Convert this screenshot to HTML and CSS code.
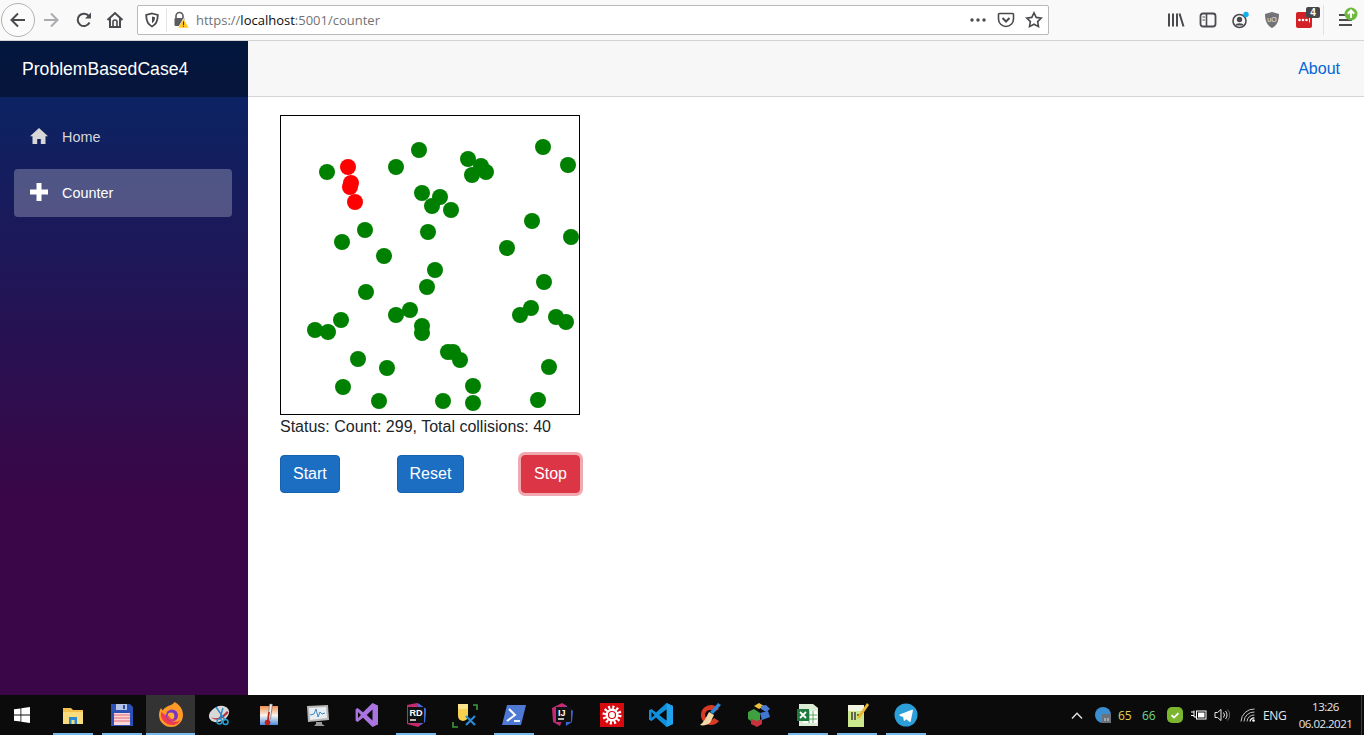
FILE: index.html
```html
<!DOCTYPE html>
<html lang="en">
<head>
<meta charset="UTF-8">
<title>ProblemBasedCase4</title>
<link rel="stylesheet" href="styles.css">
</head>
<body>

<div class="toolbar">
  <button class="nav-btn back"><svg width="20" height="20" viewBox="0 0 20 20"><path d="M17 10H4M10 3.5L3.5 10l6.500 6.500" class="stroke"/></svg></button>
  <div class="nav-btn fwd"><svg width="20" height="20" viewBox="0 0 20 20"><path d="M3 10h13M10 3.500l6.500 6.500-6.500 6.500" class="stroke muted"/></svg></div>
  <div class="nav-btn reload"><svg width="20" height="20" viewBox="0 0 20 20"><path d="M15.500 12.500a6.200 6.200 0 1 1-.6-6.300" class="stroke"/><path d="M17 2.500v6h-6z" class="fill"/></svg></div>
  <div class="nav-btn home"><svg width="20" height="20" viewBox="0 0 20 20"><path d="M2.500 10L10 3l7.500 7M5 8.500V17h10V8.500" class="stroke"/><path d="M8 17v-5a2 2 0 0 1 4 0v5" class="stroke thin"/></svg></div>

  <div class="urlbar">
    <svg class="url-shield" width="16" height="16" viewBox="0 0 16 16"><path d="M8 1.500l5.800 1.500c0 5.500-1.500 9.500-5.800 11.500C3.700 12.500 2.200 8.500 2.200 3z" fill="none" stroke="#4a4a4f" stroke-width="1.800"/><path d="M8 4.500l3 .8c0 2.500-.8 4.700-3 6z" fill="#4a4a4f"/></svg>
    <span class="url-sep"></span>
    <svg class="url-lock" width="18" height="18" viewBox="0 0 18 18"><path d="M4 7.500V5a3.500 3.500 0 0 1 7 0v2.500" fill="none" stroke="#5b5b60" stroke-width="1.600"/><rect x="2.500" y="7" width="10" height="8" rx="1" fill="#5b5b60"/><path d="M11.500 7.500l5.500 9.500H6z" fill="#ffc61e" stroke="#fff" stroke-width=".6"/><path d="M11.500 10.500v3.500M11.500 14.800v1" stroke="#3d3000" stroke-width="1"/></svg>
    <span class="url-text">https://<b>localhost</b>:5001/counter</span>
    <span class="url-actions">
      <svg width="18" height="16" viewBox="0 0 18 16"><circle cx="3" cy="8" r="1.700" class="fill"/><circle cx="9" cy="8" r="1.700" class="fill"/><circle cx="15" cy="8" r="1.700" class="fill"/></svg>
      <svg width="18" height="18" viewBox="0 0 18 18"><path d="M2.500 2.500h13a1 1 0 0 1 1 1V8a7.500 7.500 0 0 1-15 0V3.500a1 1 0 0 1 1-1z" class="stroke thin"/><path d="M5.500 7L9 10.500 12.500 7" class="stroke"/></svg>
      <svg width="18" height="18" viewBox="0 0 18 18"><path d="M9 1.800l2.200 4.600 5 .7-3.600 3.500.9 5L9 13.200 4.500 15.600l.9-5L1.800 7.100l5-.7z" class="stroke thin"/></svg>
    </span>
  </div>

  <div class="tools">
    <span class="tool"><svg width="18" height="16" viewBox="0 0 18 16"><path d="M2 1.500v13M6 1.500v13M10 1.500v13M12.500 1.500l4 13" class="stroke"/></svg></span>
    <span class="tool"><svg width="18" height="16" viewBox="0 0 18 16"><rect x="1.500" y="1.500" width="15" height="13" rx="2.500" fill="none" stroke="#4a4a4f" stroke-width="1.800"/><path d="M7.500 1.500v13" class="stroke thin"/><path d="M3.500 5h2.500M3.500 8h2.500" stroke="#4a4a4f" stroke-width="1.200"/></svg></span>
    <span class="tool"><svg width="20" height="20" viewBox="0 0 20 20"><circle cx="9.500" cy="11" r="6.500" class="stroke thin"/><circle cx="9.500" cy="9.500" r="2.700" class="fill"/><path d="M4.800 15.500a5 3.500 0 0 1 9.400 0z" class="fill"/><circle cx="16" cy="4.500" r="2.700" fill="#0fb2ee"/></svg></span>
    <span class="tool"><svg width="16" height="18" viewBox="0 0 16 18"><path d="M8 1l7 2c0 7-2 11.500-7 14C3 14.500 1 10 1 3z" fill="#737377"/><text x="8" y="10.500" class="ub-text">uO</text></svg></span>
    <span class="tool">
      <svg class="lp-box" width="16" height="16" viewBox="0 0 16 16"><circle cx="3.500" cy="8" r="1.300" fill="#fff"/><circle cx="7" cy="8" r="1.300" fill="#fff"/><circle cx="10.500" cy="8" r="1.300" fill="#fff"/><path d="M13.500 5.500v5" stroke="#fff"/></svg>
      <span class="lp-badge">4</span>
    </span>
    <span class="tool-sep"></span>
    <span class="tool menu">
      <svg width="16" height="14" viewBox="0 0 16 14"><path d="M2 2h9M2 7h13M2 12h13" class="stroke"/></svg>
      <svg class="update" width="14" height="14" viewBox="0 0 14 14"><circle cx="7" cy="7" r="6.500" fill="#6dbb3e"/><path d="M7 11V4M3.800 6.800L7 3.500l3.200 3.300" fill="none" stroke="#fff" stroke-width="2"/></svg>
    </span>
  </div>
</div>

<div class="page">
  <aside class="sidebar">
    <div class="brand-row"><a class="brand">ProblemBasedCase4</a></div>
    <ul class="nav-list">
      <li class="nav-item">
        <a class="nav-link">
          <svg class="oi" width="18" height="16" viewBox="0 0 18 16"><path d="M9 0L0 8.200h2.500V16h4.700v-5h3.600v5h4.700V8.200H18z"/></svg>
          Home
        </a>
      </li>
      <li class="nav-item">
        <a class="nav-link active">
          <svg class="oi" width="18" height="18" viewBox="0 0 18 18"><path d="M6.500 0h5v6.500H18v5h-6.500V18h-5v-6.500H0v-5h6.500z"/></svg>
          Counter
        </a>
      </li>
    </ul>
  </aside>

  <main class="main">
    <div class="top-row"><a class="about">About</a></div>
    <div class="content">
      <div class="arena">
        <svg width="298" height="298" viewBox="1 1 298 298">
          <g class="ball-red">
            <circle cx="68" cy="52" r="8"/><circle cx="71" cy="68" r="8"/><circle cx="70" cy="72" r="8"/><circle cx="75" cy="87" r="8"/>
          </g>
          <g class="ball-green">
            <circle cx="47" cy="57" r="8"/><circle cx="116" cy="52" r="8"/><circle cx="139" cy="35" r="8"/><circle cx="188" cy="44" r="8"/>
            <circle cx="201" cy="51" r="8"/><circle cx="206" cy="57" r="8"/><circle cx="192" cy="60" r="8"/><circle cx="263" cy="32" r="8"/>
            <circle cx="288" cy="50" r="8"/><circle cx="142" cy="78" r="8"/><circle cx="160" cy="82" r="8"/><circle cx="152" cy="91" r="8"/>
            <circle cx="171" cy="95" r="8"/><circle cx="252" cy="106" r="8"/><circle cx="291" cy="122" r="8"/><circle cx="227" cy="133" r="8"/>
            <circle cx="148" cy="117" r="8"/><circle cx="85" cy="115" r="8"/><circle cx="62" cy="127" r="8"/><circle cx="104" cy="141" r="8"/>
            <circle cx="155" cy="155" r="8"/><circle cx="147" cy="172" r="8"/><circle cx="86" cy="177" r="8"/><circle cx="264" cy="167" r="8"/>
            <circle cx="251" cy="193" r="8"/><circle cx="240" cy="200" r="8"/><circle cx="276" cy="202" r="8"/><circle cx="286" cy="207" r="8"/>
            <circle cx="116" cy="200" r="8"/><circle cx="130" cy="195" r="8"/><circle cx="142" cy="211" r="8"/><circle cx="142" cy="218" r="8"/>
            <circle cx="61" cy="205" r="8"/><circle cx="35" cy="215" r="8"/><circle cx="48" cy="217" r="8"/><circle cx="78" cy="244" r="8"/>
            <circle cx="107" cy="253" r="8"/><circle cx="168" cy="237" r="8"/><circle cx="173" cy="237" r="8"/><circle cx="180" cy="245" r="8"/>
            <circle cx="269" cy="252" r="8"/><circle cx="63" cy="272" r="8"/><circle cx="99" cy="286" r="8"/><circle cx="163" cy="286" r="8"/>
            <circle cx="193" cy="271" r="8"/><circle cx="193" cy="288" r="8"/><circle cx="258" cy="285" r="8"/>
          </g>
        </svg>
      </div>
      <div class="status">Status: Count: 299, Total collisions: 40</div>
      <div class="controls">
        <button class="btn btn-primary">Start</button>
        <button class="btn btn-primary">Reset</button>
        <button class="btn btn-danger">Stop</button>
      </div>
    </div>
  </main>
</div>

<footer class="taskbar">
  <div class="start"><svg width="16" height="16" viewBox="0 0 16 16"><path d="M0 2.300l6.500-.9v6.200H0zM7.300 1.300L16 0v7.600H7.300zM0 8.400h6.500v6.200L0 13.700zM7.300 8.400H16V16l-8.700-1.300z" fill="#fff"/></svg></div>

  <div class="task open"><svg width="24" height="24" viewBox="0 0 24 24"><path d="M2 5h8l2 2h10v14H2z" fill="#f4c04e"/><path d="M2 9h20v12H2z" fill="#fbdc7c"/><path d="M8 14h8v7h-2.500v-4h-3v4H8z" fill="#2a8ad4"/></svg></div>
  <div class="task open"><svg width="24" height="24" viewBox="0 0 24 24"><path d="M1 1h19l3 3v19H1z" fill="#2c50b4"/><path d="M6 1h11v6H6z" fill="#b8c4e4"/><path d="M13 2h2v4h-2z" fill="#2c50b4"/><path d="M4 10h16v12H4z" fill="#fbd7d7"/><path d="M4 12h16M4 15h16M4 18h16" stroke="#e06a78" stroke-width="1.200"/></svg></div>
  <div class="task active"><svg width="26" height="26" viewBox="0 0 26 26"><path d="M13 3c2-1 3-2 3.500-3 5 2.500 8.500 7 8.500 13a12 12 0 0 1-24 0c0-3 1-5.500 2-7l1.500 2.500C6.500 5.500 10 4 13 3z" fill="#ff9a26"/><path d="M3 10a11 11 0 0 0 20 8c-5 4-13 1-14-4z" fill="#ef3c4f"/><circle cx="14" cy="13.500" r="6" fill="#7c34c6"/><circle cx="13" cy="14" r="3.400" fill="#ffb033"/><path d="M9 14a5 5 0 0 0 9 3c-3 1-6 0-7-3z" fill="#ee4060"/></svg></div>
  <div class="task"><svg width="24" height="24" viewBox="0 0 24 24"><ellipse cx="11" cy="11" rx="10.500" ry="7.500" fill="#d8d8d8" transform="rotate(-25 11 11)"/><path d="M3 14c4 3 10 1 16-6l1.500 1.500C15 17 7 19 3 14z" fill="#b8303c"/><path d="M8 4l9 13M15 5L12 15" stroke="#2a8ac4" stroke-width="1.400"/><circle cx="17.500" cy="19" r="2.500" fill="none" stroke="#26a0d8" stroke-width="1.500"/><circle cx="11.500" cy="18.500" r="2.500" fill="none" stroke="#26a0d8" stroke-width="1.500"/></svg></div>
  <div class="task"><svg width="24" height="24" viewBox="0 0 24 24"><defs><linearGradient id="thermo" x1="0" y1="0" x2="0" y2="1"><stop offset="0" stop-color="#f09050"/><stop offset=".5" stop-color="#f8f4ee"/><stop offset="1" stop-color="#4a8ce0"/></linearGradient></defs><path d="M3 3h18v19H3z" fill="url(#thermo)"/><path d="M12.500 1h3l-2 15h-2.500z" fill="#eee" stroke="#555" stroke-width=".6"/><path d="M12 9l-1 8" stroke="#b82020" stroke-width="1.600"/><circle cx="10.500" cy="19.500" r="2.800" fill="#b82020"/></svg></div>
  <div class="task"><svg width="24" height="24" viewBox="0 0 24 24"><path d="M1 3l21-1 1 15-21 2z" fill="#b8b8b8"/><path d="M3 5l17-1 1 11-17 2z" fill="#e8eef2"/><path d="M4 12l4-1 2-5 2 8 2-5 2 2 3-1" fill="none" stroke="#3c86c4" stroke-width="1"/><path d="M10 19h6v2l3 2H8l2-2z" fill="#9a9a9a"/></svg></div>
  <div class="task"><svg width="24" height="24" viewBox="0 0 24 24"><path d="M17.500 0L23 2.600v18.800L17.500 24 8 14.800l-5.400 4.100L.6 17.800V6.200l2-1.100L8 9.200zM17.500 6.500L11.700 12l5.800 5.500zM3 9v6l3-3z" fill="#a974e0" fill-rule="evenodd"/></svg></div>
  <div class="task open"><svg width="26" height="26" viewBox="0 0 26 26"><path d="M4 3l10-2 9 6-1 13-7 5-11-3z" fill="#c6286e"/><path d="M15 1l8 6-1 13-5 3z" fill="#3d6fe0"/><path d="M4 20l7-16 5 2-2 15z" fill="#e0407c"/><rect x="5" y="5" width="16" height="16" fill="#111"/><text x="6.500" y="13.500" class="logo-text">RD</text><path d="M7 18h6" stroke="#fff" stroke-width="1.400"/></svg></div>
  <div class="task"><svg width="26" height="26" viewBox="0 0 26 26"><path d="M6 2h10v12a5 5 0 0 1-10 0z" fill="#f7d04e"/><path d="M6 2h10v5H6z" fill="#fbe58c"/><path d="M21 3h4v5M1 20v5h5" fill="none" stroke="#3c9a3c" stroke-width="1.600"/><path d="M14 14l9 9M23 14l-9 9" stroke="#2a8ad4" stroke-width="2.200"/></svg></div>
  <div class="task open"><svg width="24" height="22" viewBox="0 0 24 22"><path d="M5 1h19l-5 20H0z" fill="#4e7ad6"/><path d="M7 5l6 6-8 6" fill="none" stroke="#fff" stroke-width="2"/><path d="M12 17h6" stroke="#fff" stroke-width="1.800"/></svg></div>
  <div class="task"><svg width="26" height="26" viewBox="0 0 26 26"><path d="M2 6l10-5 5 3-7 20-7-4z" fill="#c42a74"/><path d="M15 3l8 6-1 11-6 4z" fill="#3864d4"/><rect x="6" y="5" width="15" height="15" fill="#111"/><text x="8" y="13.500" class="logo-text">IJ</text><path d="M8 17h6" stroke="#fff" stroke-width="1.400"/></svg></div>
  <div class="task"><svg width="24" height="24" viewBox="0 0 24 24"><path d="M0 0h24v24H0z" fill="#d8090f"/><circle cx="12" cy="12" r="6.500" fill="#fff"/><circle cx="12" cy="12" r="7.500" fill="none" stroke="#fff" stroke-width="4" stroke-dasharray="2 1.930"/><circle cx="12" cy="12" r="3.500" fill="none" stroke="#d8090f" stroke-width="1.200"/></svg></div>
  <div class="task"><svg width="24" height="24" viewBox="0 0 24 24"><path d="M17.500 0L24 3v18l-6.500 3L7 14.500 2.500 18 0 16.800V7.200L2.500 6 7 9.500z" fill="#0f8fdc"/><path d="M17.500 6.500L10.500 12l7 5.500zM2.500 9v6l3-3z" fill="#0b0b0b"/><path d="M17.500 0L24 3v18l-6.500 3z" fill="#1fa3ee"/><path d="M17.500 6.500L10.500 12l7 5.500z" fill="#0b0b0b"/></svg></div>
  <div class="task"><svg width="26" height="26" viewBox="0 0 26 26"><path d="M22 7a10 10 0 1 0 0 12l-5-3a5 5 0 1 1 0-6z" fill="#d83a26"/><path d="M21 1l3 2-8 9-3-2z" fill="#2e86d4"/><path d="M12 10l5 3-4 8c-3 2-7 3-10 2 3-2 6-7 9-13z" fill="#f4d8a8"/></svg></div>
  <div class="task"><svg width="24" height="24" viewBox="0 0 24 24"><path d="M7 3l5-3 5 3-5 3z" fill="#e8c040"/><path d="M14 3l5-1 4 4-4 3-5-3z" fill="#4a7cd8"/><path d="M1 9l6-3 6 4v7l-6 3-6-4z" fill="#3fa040"/><path d="M13 10l8-2 2 6-8 3z" fill="#3f78d0"/><path d="M4 16l6 2 5-2v5l-5 3-6-3z" fill="#c8323e"/></svg></div>
  <div class="task open"><svg width="24" height="24" viewBox="0 0 24 24"><path d="M3 1h14l5 4v18H3z" fill="#dcecd4"/><path d="M7 8h14v12H7z" fill="#fff"/><path d="M7 12h14M7 16h14M13 8v12M17 8v12" stroke="#5ea45e" stroke-width="1"/><path d="M1 6h12v12H1z" fill="#1d7a3c"/><path d="M4 9l6 6M10 9l-6 6" stroke="#fff" stroke-width="1.800"/></svg></div>
  <div class="task open"><svg width="24" height="26" viewBox="0 0 24 26"><path d="M3 3h16v22H3z" fill="#cde88c"/><path d="M3 3h16v6H3z" fill="#f0f4e0"/><path d="M7 10v8M10 10v8" stroke="#333" stroke-width="1.400"/><path d="M12 13h3" stroke="#333" stroke-width="1.400"/><path d="M22 1l2 2-9 13-3 1 1-3z" fill="#e8b830"/></svg></div>
  <div class="task open"><svg width="24" height="24" viewBox="0 0 24 24"><circle cx="12" cy="12" r="11.500" fill="#2c9fd9"/><path d="M5 11.800l13-5c.6-.2 1.100.1.900.9l-2.200 10.500c-.2.700-.6.900-1.200.5l-3.300-2.400-1.600 1.500c-.3.300-.5.300-.7-.1l-.8-3.600-3.100-1c-.7-.2-.7-.7 0-1z" fill="#fff"/></svg></div>

  <div class="tray">
    <svg class="tray-chevron" width="12" height="7" viewBox="0 0 12 7"><path d="M1 6.500L6 1.200l5 5.300" fill="none" stroke="#e6e6e6" stroke-width="1.300"/></svg>
    <svg class="tray-globe" width="16" height="16" viewBox="0 0 16 16"><circle cx="8" cy="8" r="8" fill="#3b8ed0"/><path d="M7 7h9v9H7z" fill="#6c7278"/><path d="M10 14v-3M13 14v-3" stroke="#ddd"/></svg>
    <span class="temp temp-a">65</span>
    <span class="temp temp-b">66</span>
    <svg class="tray-shield" width="16" height="16" viewBox="0 0 16 16"><rect width="16" height="16" rx="5" fill="#7bb62e"/><path d="M4.500 8.200l2.500 2.400 4.500-4.500" fill="none" stroke="#fff" stroke-width="1.800"/></svg>
    <svg class="tray-power" width="16" height="12" viewBox="0 0 16 12"><path d="M0 3h3M0 6.500h3M3 1.500v6.500h2" fill="none" stroke="#fff" stroke-width="1"/><rect x="5.500" y="2" width="9.500" height="8" fill="none" stroke="#fff"/><path d="M7 3.500h6.500v5H7z" fill="#fff"/></svg>
    <svg class="tray-sound" width="16" height="14" viewBox="0 0 16 14"><path d="M1 4.500h2.500L7 1.500v11l-3.500-3H1z" fill="none" stroke="#e6e6e6"/><path d="M9.500 4.500a4 4 0 0 1 0 5M11.500 3a6 6 0 0 1 0 8" fill="none" stroke="#e6e6e6"/><path d="M13.500 1.500a8 8 0 0 1 0 11" fill="none" stroke="#666"/></svg>
    <svg class="tray-wifi" width="16" height="14" viewBox="0 0 16 14"><path d="M1 13.500A13 13 0 0 1 14.500 1M4 13.500A10 10 0 0 1 14.500 4M7 13.500A7 7 0 0 1 14.500 7" fill="none" stroke="#c4c4c4"/><path d="M10 13.500A4 4 0 0 1 14.500 10" fill="none" stroke="#fff" stroke-width="1.200"/><circle cx="13.500" cy="12.500" r="1.300" fill="#fff"/></svg>
    <span class="lang">ENG</span>
    <div class="clock"><span>13:26</span><span>06.02.2021</span></div>
    <span class="show-desktop"></span>
  </div>
</footer>

</body>
</html>
```

FILE: styles.css
```css
* {
  box-sizing: border-box;
}
html, body {
  height: 100%;
}
body {
  margin: 0;
  display: flex;
  flex-direction: column;
  height: 735px;
  overflow: hidden;
  font-family: "Liberation Sans", Arial, sans-serif;
  font-size: 16px;
  color: #212529;
  background: #fff;
}

/* browser toolbar */
.toolbar {
  flex: none;
  display: flex;
  align-items: center;
  height: 41px;
  padding-left: 1px;
  background: #f9f9fa;
  border-bottom: 1px solid #d4d4d6;
}
.stroke {
  fill: none;
  stroke: #4a4a4f;
  stroke-width: 2;
}
.stroke.thin {
  stroke-width: 1.600;
}
.stroke.muted {
  stroke: #ababaf;
}
.fill {
  fill: #4a4a4f;
}
.nav-btn {
  display: flex;
  align-items: center;
  justify-content: center;
  flex: none;
  height: 34px;
  padding: 0;
  background: none;
  border: none;
}
.back {
  width: 34px;
  background: #fbfbfc;
  border: 1px solid #b1b1b3;
  border-radius: 50%;
}
.fwd {
  width: 32px;
}
.reload {
  width: 34px;
}
.home {
  width: 28px;
}
.urlbar {
  flex: none;
  display: flex;
  align-items: center;
  width: 912px;
  height: 30px;
  margin-left: 8px;
  margin-top: -1px;
  padding-left: 6px;
  background: #fff;
  border: 1px solid #b9b9bb;
  border-radius: 2px;
}
.url-shield {
  flex: none;
}
.url-sep {
  flex: none;
  width: 1px;
  height: 24px;
  margin: 0 5px 0 6px;
  background: #e4e4e6;
}
.url-lock {
  flex: none;
}
.url-text {
  margin-left: 6px;
  font-family: "Open Sans", "Noto Sans", sans-serif;
  font-size: 13px;
  color: #737373;
}
.url-text b {
  font-weight: 400;
  color: #0c0c0d;
}
.url-actions {
  display: flex;
  align-items: center;
  gap: 10px;
  margin-left: auto;
  margin-right: 5px;
}
.tools {
  display: flex;
  align-items: center;
  margin-left: 111px;
  height: 40px;
}
.tool {
  position: relative;
  display: flex;
  align-items: center;
  justify-content: center;
  width: 32px;
  height: 34px;
}
.ub-text {
  font-family: "Liberation Sans", sans-serif;
  font-size: 7px;
  fill: #e8e8e8;
  text-anchor: middle;
}
.lp-box {
  border-radius: 2px;
  background: #d32027;
}
.lp-badge {
  position: absolute;
  top: 4px;
  right: 0;
  width: 14px;
  height: 11px;
  border-radius: 2px;
  background: #47474a;
  color: #fff;
  font-size: 10px;
  font-weight: 700;
  line-height: 11px;
  text-align: center;
}
.tool-sep {
  width: 1px;
  height: 30px;
  margin: 0 5px 0 3px;
  background: #e2e2e4;
}
.menu {
  width: 32px;
}
.update {
  position: absolute;
  top: 4px;
  right: 3px;
}

/* app */
.page {
  flex: 1;
  display: flex;
  min-height: 0;
}
.sidebar {
  flex: none;
  width: 248px;
  background: linear-gradient(180deg, #052767 0%, #3a0647 70%);
}
.brand-row {
  display: flex;
  align-items: center;
  height: 56px;
  padding-left: 22px;
  background: rgba(0, 0, 0, .4);
}
.brand {
  font-size: 17.600px;
  color: #fff;
}
.nav-list {
  list-style: none;
  margin: 0;
  padding: 16px 16px 0 14px;
}
.nav-item {
  padding-bottom: 8px;
}
.nav-link {
  display: flex;
  align-items: center;
  height: 48px;
  padding-left: 16px;
  border-radius: 4px;
  font-size: 14.400px;
  color: #d7d7d7;
}
.nav-link.active {
  background: rgba(255, 255, 255, .25);
  color: #fff;
}
.oi {
  flex: none;
  width: 18px;
  margin-right: 14px;
  margin-top: -3px;
  fill: currentColor;
}

.main {
  flex: 1;
  min-width: 0;
}
.top-row {
  display: flex;
  align-items: center;
  justify-content: flex-end;
  height: 56px;
  padding-right: 24px;
  background: #f7f7f7;
  border-bottom: 1px solid #d6d5d5;
}
.about {
  color: #0366d6;
}
.content {
  width: 364px;
  padding: 18px 32px 0;
}
.arena {
  width: 300px;
  height: 300px;
  border: 1px solid #000;
}
.arena svg {
  display: block;
}
.ball-red {
  fill: #f00;
}
.ball-green {
  fill: #008000;
}
.status {
  line-height: 24px;
}
.controls {
  display: flex;
  justify-content: space-between;
  width: 300px;
  margin-top: 16px;
}
.btn {
  height: 38px;
  padding: 0 12px;
  border: 1px solid transparent;
  border-radius: 4px;
  font-family: inherit;
  font-size: 16px;
  color: #fff;
}
.btn-primary {
  background: #1b6ec2;
  border-color: #1861ac;
}
.btn-danger {
  background: #dc3545;
  border-color: #dc3545;
  box-shadow: 0 0 0 3px rgba(225, 83, 97, .5);
}

/* windows taskbar */
.taskbar {
  flex: none;
  display: flex;
  align-items: center;
  height: 40px;
  background: #0b0b0c;
  font-family: "Open Sans", "Noto Sans", sans-serif;
  color: #e6e6e6;
}
.start {
  flex: none;
  display: flex;
  align-items: center;
  justify-content: center;
  width: 44px;
  height: 40px;
  margin-right: 4px;
}
.task {
  flex: none;
  position: relative;
  display: flex;
  align-items: center;
  justify-content: center;
  width: 49px;
  height: 40px;
}
.task.open::after,
.task.active::after {
  content: "";
  position: absolute;
  left: 5px;
  right: 4px;
  bottom: 0;
  height: 2px;
  background: #76b9ed;
}
.task.active {
  background: #333;
}
.task.active::after {
  left: 0;
  right: 0;
}
.tray {
  flex: 1;
  display: flex;
  align-items: center;
  height: 40px;
  padding-left: 141px;
  font-size: 12px;
}
.tray-chevron {
  flex: none;
  margin-right: 12px;
}
.tray-globe {
  flex: none;
  margin-right: 7px;
}
.temp {
  width: 24px;
}
.temp-a {
  color: #e4d24c;
}
.temp-b {
  color: #6edc8c;
}
.tray-shield {
  flex: none;
  margin: 0 8px 0 1px;
}
.tray-power {
  flex: none;
  margin-right: 7px;
}
.tray-sound {
  flex: none;
  margin-right: 10px;
}
.tray-wifi {
  flex: none;
  margin-right: 7px;
}
.lang {
  letter-spacing: -.3px;
}
.clock {
  display: flex;
  flex-direction: column;
  align-items: center;
  flex: none;
  width: 60px;
  margin-left: 9px;
  font-size: 11.500px;
  letter-spacing: -.5px;
  line-height: 17px;
}
.show-desktop {
  width: 1px;
  height: 40px;
  margin-left: auto;
  margin-right: 2px;
  background: #3a3a3a;
}
.logo-text {
  font-family: "Liberation Sans", sans-serif;
  font-size: 9px;
  font-weight: 700;
  fill: #fff;
}
```
